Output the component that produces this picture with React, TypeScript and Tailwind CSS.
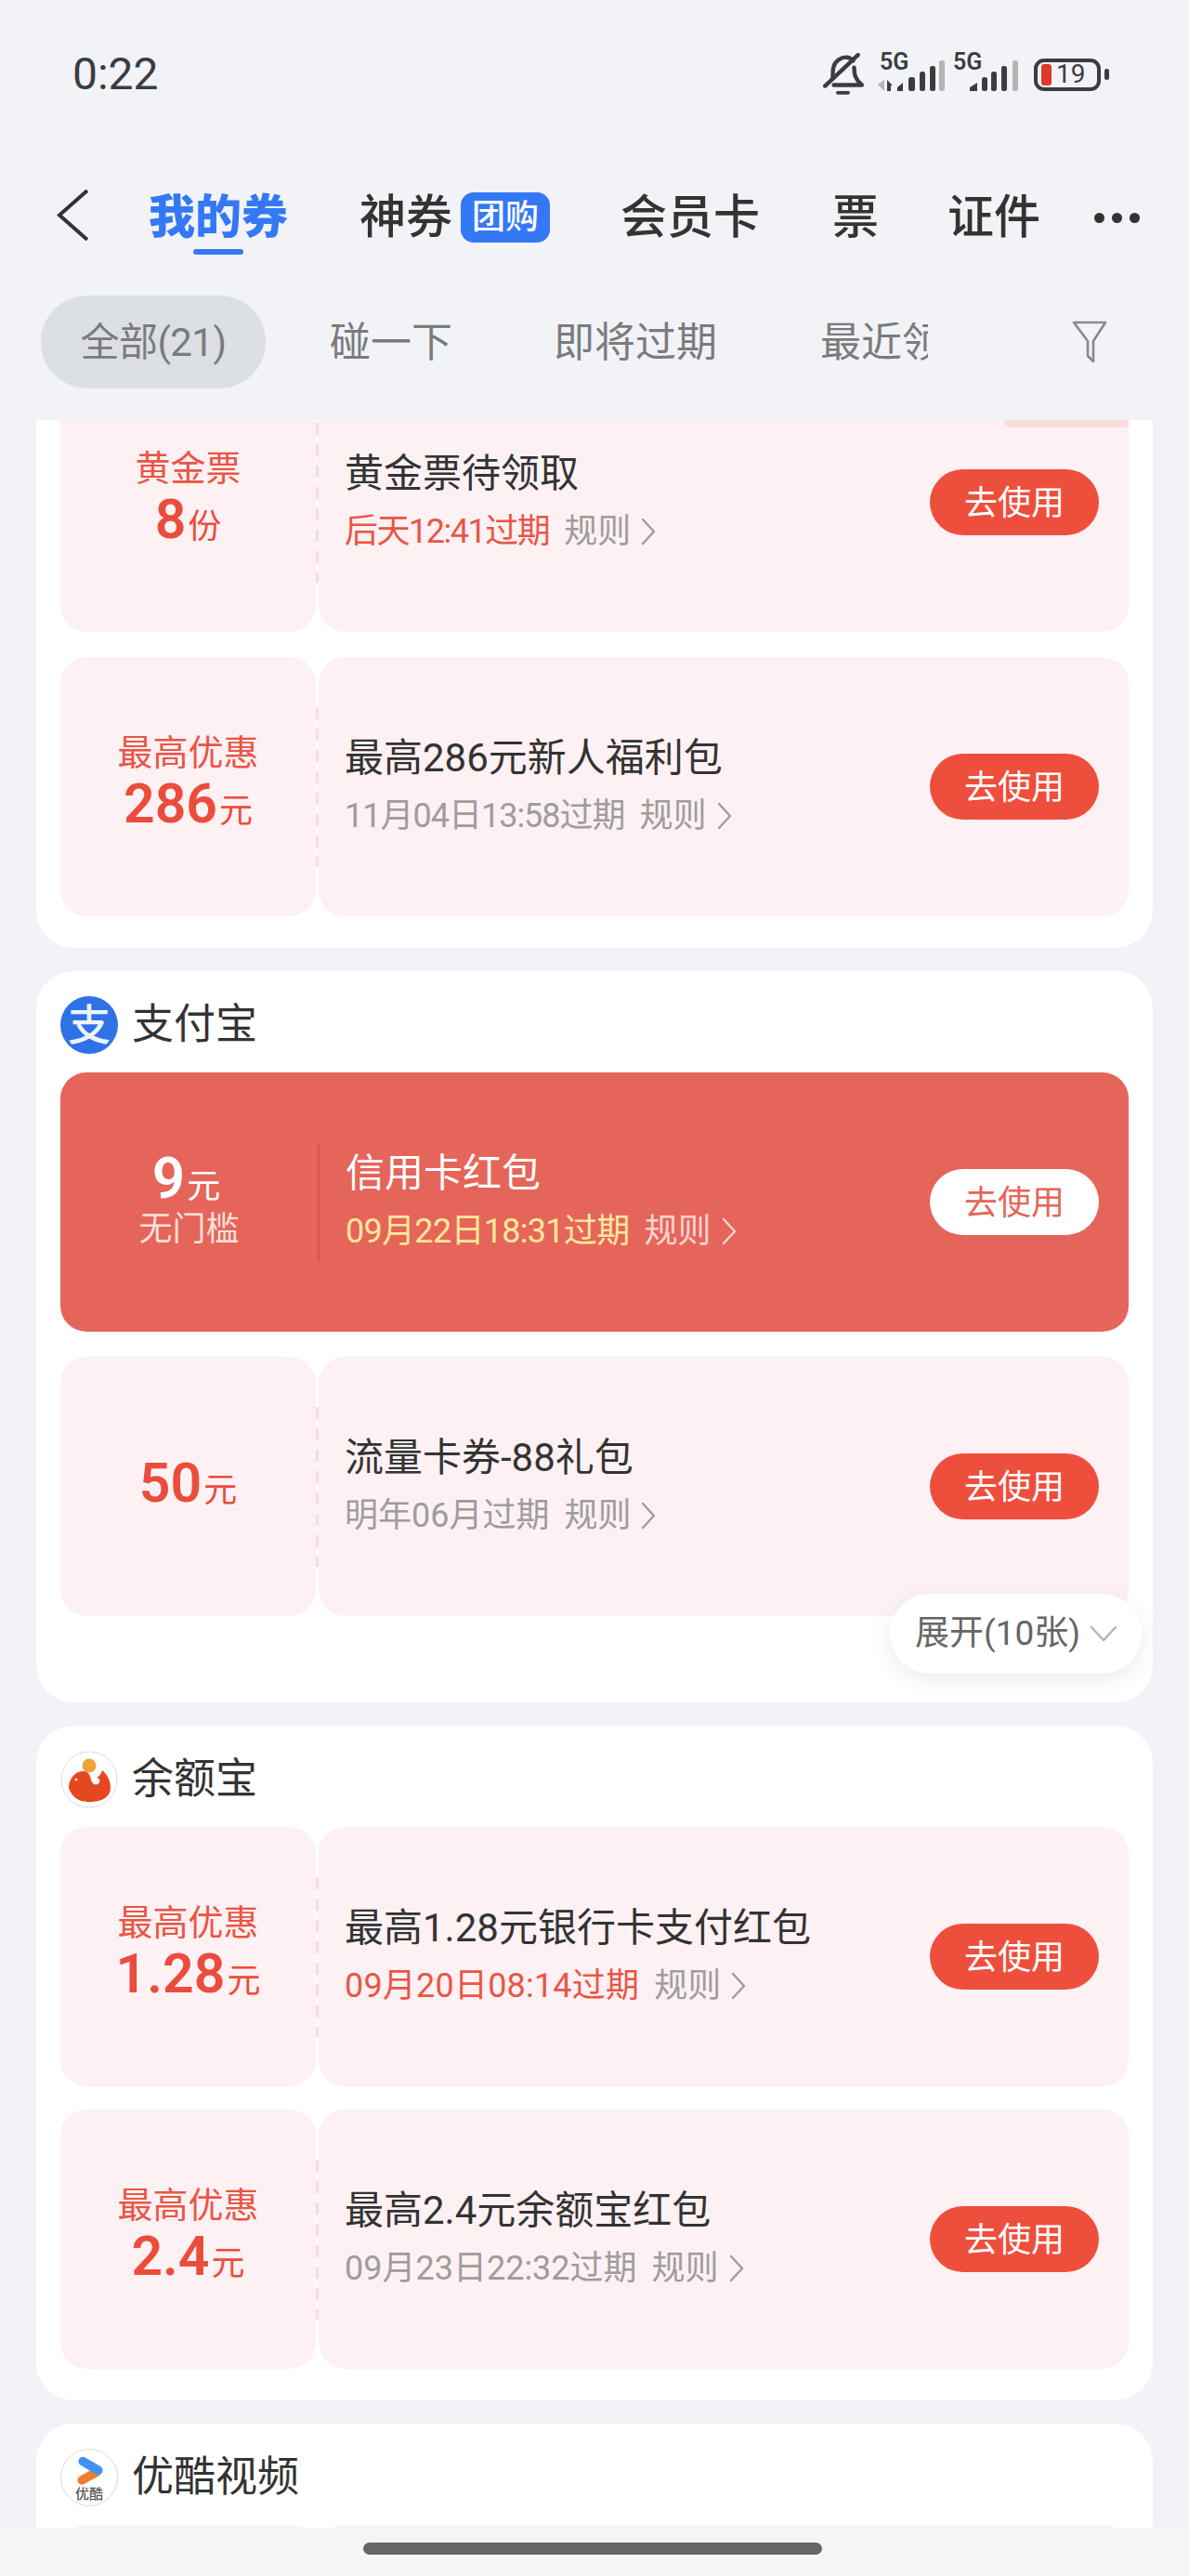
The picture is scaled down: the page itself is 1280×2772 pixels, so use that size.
const FONT = 'font-["Roboto","Noto_Sans_CJK_SC",sans-serif]';

type CouponProps = {
  label?: string;
  amount: string;
  unit: string;
  title: string;
  expire: string;
  expireClass?: string;
  urgent?: boolean;
  className?: string;
};

const Chevron = ({ className }: { className: string }) => (
  <svg viewBox="0 0 18 30" className={className} fill="none" stroke="currentColor" strokeWidth="2.4" strokeLinecap="round" strokeLinejoin="round">
    <path d="M3 2 L15 15 L3 28" />
  </svg>
);

const Coupon = ({ label, amount, unit, title, expire, expireClass = '', urgent, className = '' }: CouponProps) => (
  <div className={`flex h-[279px] ${className}`}>
    <div className="w-[275px] shrink-0 rounded-[28px] bg-[#fdf1f3] flex flex-col items-center justify-center pb-[8px]">
      {label && <div className="h-[44px] leading-[44px] text-[38px] text-[#ea5546]">{label}</div>}
      <div className="h-[66px] leading-[66px] text-[#ea4d3d] flex items-baseline">
        <span className="text-[59px] font-semibold">{amount}</span>
        <span className="text-[36px] ml-[2px]">{unit}</span>
      </div>
    </div>
    <div className="w-[3px] shrink-0 flex flex-col justify-center">
      <div className="h-[172px] w-[3px] bg-[repeating-linear-gradient(to_bottom,#f8dbe0_0,#f8dbe0_13px,#fff7f8_13px,#fff7f8_23px)]" />
    </div>
    <div className="flex-1 rounded-[28px] bg-[#fdf1f3] pl-[28px] pr-[32px] flex items-center justify-between">
      <div>
        <div className="h-[50px] leading-[50px] text-[42px] text-[#333]">{title}</div>
        <div className="mt-[12px] h-[50px] leading-[50px] text-[36px] flex items-center text-[#a09c9d]">
          <span className={`${urgent ? 'text-[#ea5546]' : ''} ${expireClass}`}>{expire}</span>
          <span className="ml-[16px]">规则</span>
          <Chevron className="ml-[10px] w-[18px] h-[30px]" />
        </div>
      </div>
      <div className="w-[182px] h-[71px] pt-[2px] rounded-full bg-[#ee4f3d] text-white text-[36px] flex items-center justify-center">去使用</div>
    </div>
  </div>
);

const ActiveCoupon = () => (
  <div className="flex h-[279px] rounded-[28px] bg-[#e5655a] items-center">
    <div className="w-[277px] shrink-0 flex flex-col items-center text-white pb-[8px]">
      <div className="h-[66px] leading-[66px] flex items-baseline pr-[6px]">
        <span className="text-[62px] font-semibold">9</span>
        <span className="text-[36px] ml-[2px]">元</span>
      </div>
      <div className="h-[44px] leading-[44px] text-[36px] text-[#fbdfdb]">无门槛</div>
    </div>
    <div className="w-[2px] h-[128px] shrink-0 bg-[#d4574d]" />
    <div className="flex-1 pl-[28px] pr-[32px] flex items-center justify-between">
      <div>
        <div className="h-[50px] leading-[50px] text-[42px] text-white">信用卡红包</div>
        <div className="mt-[12px] h-[50px] leading-[50px] text-[36px] flex items-center text-[#f8d5d0]">
          <span className="text-[#fde89b] tracking-[-0.7px]">09月22日18:31过期</span>
          <span className="ml-[16px]">规则</span>
          <Chevron className="ml-[10px] w-[18px] h-[30px]" />
        </div>
      </div>
      <div className="w-[182px] h-[71px] pt-[2px] rounded-full bg-white text-[#e5655a] text-[36px] flex items-center justify-center">去使用</div>
    </div>
  </div>
);

const BrandHeader = ({ icon, name }: { icon: React.ReactNode; name: string }) => (
  <div className="h-[109px] pt-[27px] flex items-start">
    <div className="w-[62px] h-[62px] shrink-0">{icon}</div>
    <div className="ml-[15px] h-[62px] leading-[62px] text-[45px] text-[#333]">{name}</div>
  </div>
);

const AlipayIcon = () => (
  <div className="w-full h-full rounded-full bg-[#2f72e8] flex items-center justify-center text-[#eef4fd] text-[46px] leading-none font-medium">支</div>
);

const YuebaoIcon = () => (
  <svg viewBox="0 0 62 62" className="w-full h-full">
    <circle cx="31" cy="31" r="30" fill="#fff" stroke="#d9dde2" strokeWidth="1" />
    <circle cx="31" cy="16" r="7.5" fill="#eda23a" />
    <path d="M9 40 C9 29 17 21 26 22 C31 23 32 27 33 31 C34 37 40 38 42 34 C43 31 41 29 39 29 C42 27 44 25 45 21 C51 26 54 33 54 40 C54 50 44 55 32 55 C25 55 14 54 9 40 Z" fill="#e5481f" />
    <circle cx="17" cy="31" r="1.5" fill="#f7d9b0" />
  </svg>
);

const YoukuIcon = () => (
  <div className="relative w-full h-full rounded-full border border-[#d9d9d9] bg-white overflow-hidden">
    <svg viewBox="0 0 62 62" className="absolute inset-0 w-full h-full" fill="none" strokeLinecap="round">
      <path d="M39 25 L23 34" stroke="#ef7f2e" strokeWidth="10" />
      <path d="M24 13 L41 23" stroke="#3f93f5" strokeWidth="10" />
    </svg>
    <div className="absolute left-0 right-0 top-[39px] text-center text-[15px] leading-[18px] font-medium text-[#555]">优酷</div>
  </div>
);

const Bar = ({ x, w, h, fill = '#3c3c40' }: { x: number; w: number; h: number; fill?: string }) => (
  <rect x={x} y={34 - h} width={w} height={h} rx="2.5" fill={fill} />
);

const Label5G = ({ className }: { className: string }) => (
  <div className={`absolute top-[-5px] text-[25px] leading-[28px] font-semibold font-['Roboto',sans-serif] ${className}`}>5G</div>
);

const StatusBar = () => (
  <div className="h-[160px] pl-[78px] pr-[86px] flex items-center justify-between text-[#3c3c40]">
    <div className="text-[48px] leading-none font-['Roboto',sans-serif]">0:22</div>
    <div className="flex items-center h-[50px]">
      <svg viewBox="0 0 42 44" className="w-[44px] h-[46px]" fill="none" stroke="#3c3c40" strokeWidth="4.2" strokeLinecap="round" strokeLinejoin="round">
        <path d="M10 26 C10 20 9 12 16 7 C22 3 28 4 31 8" />
        <path d="M32 15 C32 22 33 27 40 33 H11" />
        <path d="M2 34 L36 2" />
        <path d="M15 41 H26" strokeWidth="3.4" />
      </svg>
      <div className="relative ml-[15px] w-[72px] h-[44px] flex items-end pb-[4px]">
        <Label5G className="left-[2px]" />
        <svg viewBox="0 0 72 34" className="w-[72px] h-[34px] shrink-0">
          <path d="M7 22 V34 L0 27 Z" fill="#b4b4b4" />
          <path d="M10 22 L16 28 H14 V34 H10 Z" fill="#3c3c40" />
          <path d="M21 34 V30 L27 25 V34 Z" fill="#3c3c40" />
          <Bar x={33} w={7} h={15} />
          <Bar x={45} w={6} h={21} />
          <Bar x={56} w={6} h={27} />
          <Bar x={66} w={6} h={33} fill="#b4b4b4" />
        </svg>
      </div>
      <div className="relative ml-[9px] w-[70px] h-[44px] flex items-end justify-end pb-[4px]">
        <Label5G className="left-0" />
        <svg viewBox="0 0 52 34" className="w-[52px] h-[34px] shrink-0">
          <path d="M0 34 V30 L8 25 V34 Z" fill="#3c3c40" />
          <Bar x={13} w={6} h={15} />
          <Bar x={23} w={6} h={21} />
          <Bar x={34} w={6} h={27} />
          <Bar x={46} w={6} h={33} fill="#b4b4b4" />
        </svg>
      </div>
      <div className="ml-[17px] w-[72px] h-[35px] rounded-[11px] border-[4px] border-[#3c3c40] flex items-center pl-[4px]">
        <div className="w-[11px] h-[23px] rounded-[3px] bg-[#dc3a2c]" />
        <div className="ml-[5px] text-[28px] leading-none font-['Roboto',sans-serif]">19</div>
      </div>
      <div className="ml-[4px] w-[5px] h-[12px] rounded-full bg-[#3c3c40]" />
    </div>
  </div>
);

const TabBar = () => (
  <div className="mt-[19px] h-[110px] pl-[60px] flex items-center text-[50px] leading-none text-[#333] font-medium">
    <svg viewBox="0 0 35 55" className="w-[35px] h-[55px] mt-[-6px] text-[#333]" fill="none" stroke="currentColor" strokeWidth="4" strokeLinejoin="miter">
      <path d="M34 1 L4 27.5 L34 54" />
    </svg>
    <div className="relative ml-[65px] text-[#3478f6] font-black">
      我的券
      <div className="absolute left-[48px] bottom-[-15px] w-[54px] h-[6px] rounded-full bg-[#3478f6]" />
    </div>
    <div className="ml-[77px]">神券</div>
    <div className="ml-[9px] w-[96px] h-[54px] rounded-[14px] bg-[#3478f6] text-white text-[36px] font-medium flex items-center justify-center">团购</div>
    <div className="ml-[76px]">会员卡</div>
    <div className="ml-[78px]">票</div>
    <div className="ml-[74px]">证件</div>
    <div className="ml-[58px] flex gap-[8px]">
      <span className="w-[11px] h-[11px] rounded-full bg-[#333]" />
      <span className="w-[11px] h-[11px] rounded-full bg-[#333]" />
      <span className="w-[11px] h-[11px] rounded-full bg-[#333]" />
    </div>
  </div>
);

const FilterBar = () => (
  <div className="mt-[29px] h-[100px] pl-[44px] flex items-center text-[44px] leading-none text-[#7b7b7d]">
    <div className="w-[242px] h-[100px] pt-[2px] rounded-full bg-[#dcdfe4] flex items-center justify-center text-[42px] tracking-[-0.5px]">全部(21)</div>
    <div className="ml-[69px] mt-[2px]">碰一下</div>
    <div className="ml-[109px] mt-[2px]">即将过期</div>
    <div className="ml-[111px] mt-[2px] w-[116px] overflow-hidden whitespace-nowrap">最近领</div>
    <svg viewBox="0 0 38 46" className="ml-[155px] w-[38px] h-[46px]" fill="none" stroke="#8a8a8c" strokeWidth="2.6" strokeLinejoin="round" strokeLinecap="round">
      <path d="M2 2 H36 L23 22 V44 L17 38 V22 Z" />
    </svg>
  </div>
);

const App = () => (
  <div className={`w-[1280px] h-[2772px] overflow-hidden bg-[#f1f3f7] flex flex-col ${FONT}`}>
    <StatusBar />
    <TabBar />
    <FilterBar />
    <div className="mt-[34px] h-[2268px] overflow-hidden px-[39px] flex flex-col gap-[25px]">
      <div className="relative shrink-0 bg-white rounded-[40px] px-[26px] pb-[34px] mt-[-51px]">
        <Coupon label="黄金票" amount="8" unit="份" title="黄金票待领取" expire="后天12:41过期" expireClass="tracking-[-1.5px]" urgent />
        <div className="absolute right-[26px] top-[51px] w-[134px] h-[8px] rounded-bl-[14px] bg-[#fbdcdc]" />
        <Coupon className="mt-[27px]" label="最高优惠" amount="286" unit="元" title="最高286元新人福利包" expire="11月04日13:58过期" expireClass="tracking-[-1px]" />
      </div>
      <div className="relative shrink-0 bg-white rounded-[40px] px-[26px] pb-[93px]">
        <BrandHeader icon={<AlipayIcon />} name="支付宝" />
        <ActiveCoupon />
        <Coupon className="mt-[27px]" amount="50" unit="元" title="流量卡券-88礼包" expire="明年06月过期" />
        <div className="absolute right-[12px] bottom-[31px] w-[271px] h-[86px] rounded-full bg-white shadow-[0_6px_24px_rgba(0,0,0,0.08)] pl-[27px] flex items-center text-[37px] text-[#666]">
          展开(10张)
          <svg viewBox="0 0 30 18" className="ml-[10px] w-[30px] h-[18px]" fill="none" stroke="#b4b4b4" strokeWidth="2.4" strokeLinecap="round" strokeLinejoin="round">
            <path d="M2 2 L15 16 L28 2" />
          </svg>
        </div>
      </div>
      <div className="shrink-0 bg-white rounded-[40px] px-[26px] pb-[34px]">
        <BrandHeader icon={<YuebaoIcon />} name="余额宝" />
        <Coupon label="最高优惠" amount="1.28" unit="元" title="最高1.28元银行卡支付红包" expire="09月20日08:14过期" expireClass="tracking-[0.2px]" urgent />
        <Coupon className="mt-[25px]" label="最高优惠" amount="2.4" unit="元" title="最高2.4元余额宝红包" expire="09月23日22:32过期" />
      </div>
      <div className="shrink-0 bg-white rounded-[40px] px-[26px] pb-[34px]">
        <BrandHeader icon={<YoukuIcon />} name="优酷视频" />
        <div className="flex gap-[3px] h-[279px]">
          <div className="w-[275px] rounded-[28px] bg-[#fdf1f3]" />
          <div className="flex-1 rounded-[28px] bg-[#fdf1f3]" />
        </div>
      </div>
    </div>
    <div className="h-[52px] shrink-0 bg-[#f5f5f7] flex justify-center pt-[16px] pr-[4px]">
      <div className="w-[494px] h-[13px] rounded-full bg-[#666]" />
    </div>
  </div>
);

export default App;
